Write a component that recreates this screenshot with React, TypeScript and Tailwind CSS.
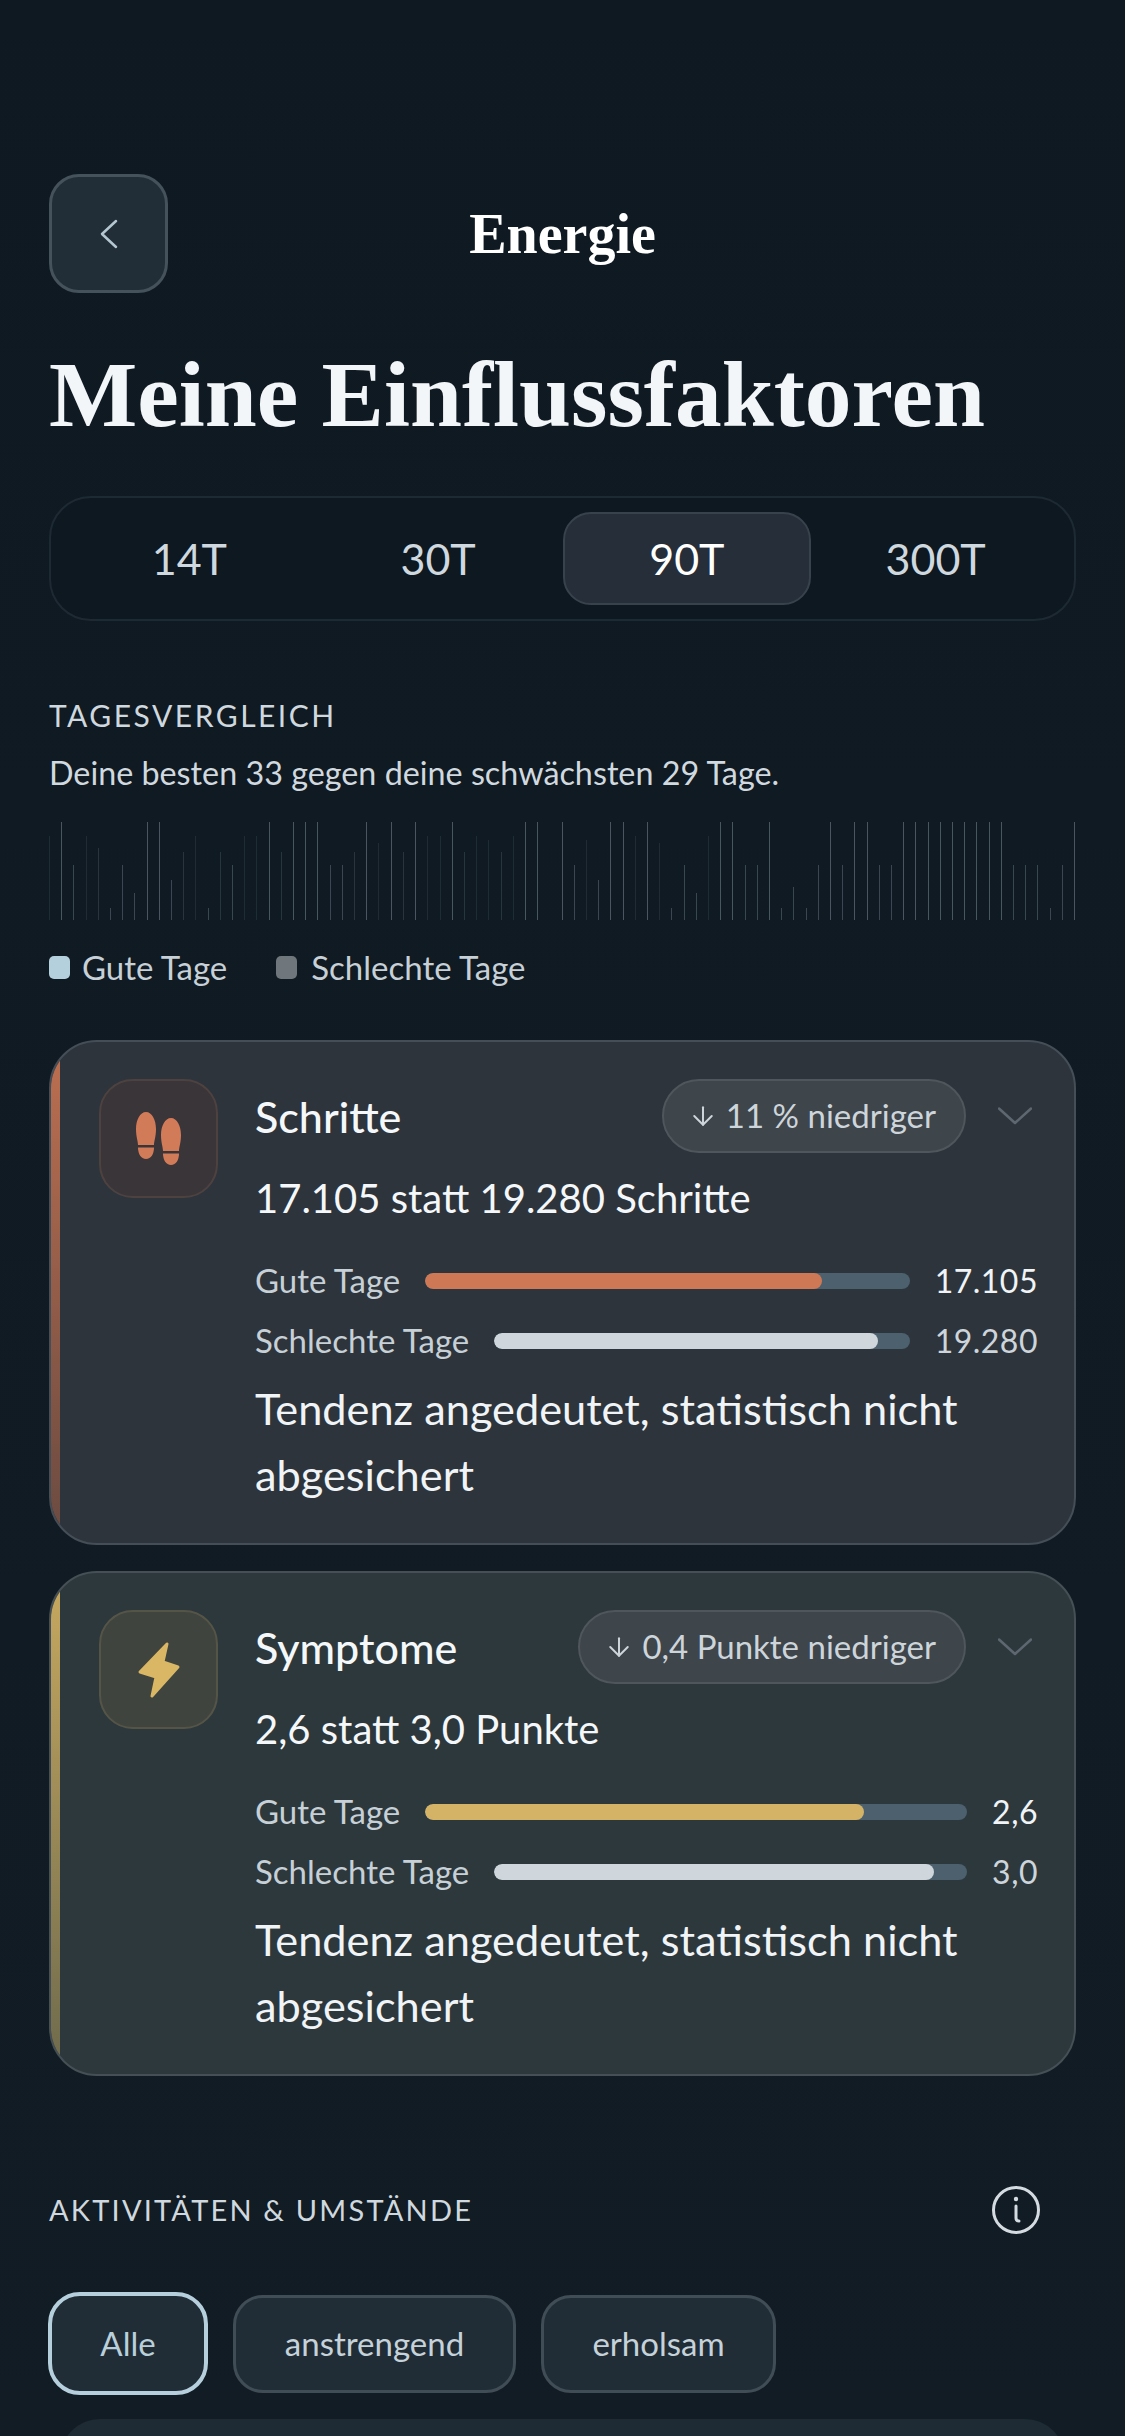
import { ArrowDown } from 'lucide-react'

const SERIF = 'font-["Liberation_Serif",serif]'

// top edge of each day's bar, in 3x crop pixels of the 98px tall strip
const dayTops = [
  78, 36, 165, 78, 115, 295, 165, 250, 36, 36, 210, 125, 78, 295, 125, 165, 78, 78, 36, 125, 36, 36, 36, 165,
  165, 125, 36, 100, 36, 125, 36, 78, 78, 36, 125, 78, 90, 125, 78, 36, 36, 330, 36, 165, 90, 210, 36, 36,
  78, 36, 100, 295, 165, 250, 78, 36, 36, 165, 165, 36, 295, 230, 295, 165, 36, 165, 36, 36, 165, 165, 36, 36, 36,
  36, 36, 36, 36, 36, 36, 165, 165, 165, 295, 165, 36,
]

function barColor(top: number) {
  if (top === 36) return '#4a565f'
  if (top >= 165) return '#3a4650'
  if (top >= 115) return '#29353d'
  return '#202c34'
}

function ChevronDownThin() {
  return (
    <svg width="34" height="18" viewBox="0 0 34 18" fill="none" className="shrink-0">
      <path d="M1 1.5 L17 16 L33 1.5" stroke="#5e6770" strokeWidth="2.5" strokeLinecap="round" strokeLinejoin="round" />
    </svg>
  )
}

function Footprints() {
  const sole = 'M11 1 C17 1 21 9 21 18 C21 26 19 30 19 34 L3 34 C3 30 1 26 1 18 C1 9 5 1 11 1Z'
  const heel = 'M3 36.5 H19 C19 43 16 48 11 48 C6 48 3 43 3 36.5Z'
  return (
    <svg width="48" height="55" viewBox="0 0 48 55" fill="#d27b58">
      <path d={sole} />
      <path d={heel} />
      <g transform="translate(25 6)">
        <path d={sole} />
        <path d={heel} />
      </g>
    </svg>
  )
}

function Bolt() {
  return (
    <svg width="44" height="58" viewBox="0 0 44 58" fill="#d9b764" stroke="#d9b764" strokeWidth="3" strokeLinejoin="round">
      <path d="M30 3 L3 31 L19 36 L15 55 L41 26 L26 21 Z" />
    </svg>
  )
}

type Row = { label: string; value: string; pct: number; color: string; valueColor: string }

function Bar({ label, value, pct, color, valueColor }: Row) {
  return (
    <div className="flex items-center h-[60px]">
      <span className="text-[33px] text-[#c6d0d6] mr-[25px]">{label}</span>
      <div className="flex-1 h-[16px] rounded-full bg-[#4c606d] overflow-hidden">
        <div className="h-full rounded-full" style={{ width: `${pct}%`, backgroundColor: color }} />
      </div>
      <span className="text-[32px] ml-[25px] tracking-[0.5px]" style={{ color: valueColor }}>{value}</span>
    </div>
  )
}

function FactorCard(props: {
  title: string
  badge: string
  summary: string
  icon: React.ReactNode
  cardBg: string
  cardBorder: string
  tile: string
  accent: string
  rows: Row[]
}) {
  return (
    <div className={`relative overflow-hidden rounded-[48px] border-2 h-[505px] pl-[48px] pr-[36px] pt-[37px] flex gap-[37px] ${props.cardBg} ${props.cardBorder}`}>
      <div className={`absolute left-0 top-0 bottom-0 w-[9px] ${props.accent}`} />
      <div className={`w-[119px] h-[119px] rounded-[34px] border-2 flex items-center justify-center shrink-0 ${props.tile}`}>
        {props.icon}
      </div>
      <div className="flex-1 min-w-0">
        <div className="flex items-center h-[74px]">
          <h3 className="text-[43px] font-medium text-[#f5f8fa] pt-[2px]">{props.title}</h3>
          <div className="ml-auto flex items-center h-[74px] pl-[24px] pr-[28px] gap-[8px] rounded-full bg-[#3e454b] border-2 border-[#4f565c] text-[33px] text-[#cdd5db]">
            <ArrowDown size={30} strokeWidth={1.6} />
            <span>{props.badge}</span>
          </div>
          <div className="ml-[32px] mr-[6px]">
            <ChevronDownThin />
          </div>
        </div>
        <p className="mt-[20px] text-[40px] leading-[50px] text-[#f5f8fa]">{props.summary}</p>
        <div className="mt-[28px]">
          {props.rows.map(r => <Bar key={r.label} {...r} />)}
        </div>
        <p className="mt-[4px] text-[43.3px] leading-[66px] text-[#f0f4f6]">
          Tendenz angedeutet, statistisch nicht abgesichert
        </p>
      </div>
    </div>
  )
}

export default function App() {
  return (
    <div className='w-[1125px] h-[2436px] overflow-hidden bg-gradient-to-b from-[#0f1921] to-[#121c24] px-[49px] pt-[174px] font-["Lato",sans-serif]'>
      {/* Header */}
      <div className="flex items-center justify-between">
        <button className="w-[119px] h-[119px] rounded-[30px] bg-[#212e38] border-[3px] border-[#45525c] flex items-center justify-center">
          <svg width="20" height="30" viewBox="0 0 20 30" fill="none">
            <path d="M17 2 L3 15 L17 28" stroke="#b4c6d0" strokeWidth="2.5" strokeLinecap="round" strokeLinejoin="round" />
          </svg>
        </button>
        <h2 className={`${SERIF} font-bold text-[56px] text-white`}>Energie</h2>
        <div className="w-[119px]" />
      </div>

      <h1 className={`${SERIF} font-bold text-[93.5px] leading-[110px] text-[#f2f6f9] mt-[47px]`}>Meine Einflussfaktoren</h1>

      {/* Range */}
      <div className="grid grid-cols-4 mt-[46px] h-[125px] p-[14px] rounded-[42px] bg-[#0e1821] border-2 border-[#1e2a33]">
        {['14T', '30T', '90T', '300T'].map(t => (
          <button
            key={t}
            className={t === '90T'
              ? 'rounded-[28px] bg-[#252e39] border-2 border-[#38424d] text-[43px] text-white pt-[2px]'
              : 'rounded-[28px] text-[43px] text-[#cfd8de] pt-[2px]'}
          >
            {t}
          </button>
        ))}
      </div>

      {/* Tagesvergleich */}
      <div className="mt-[76px] text-[30px] leading-[36px] tracking-[2.5px] text-[#cfd8de]">TAGESVERGLEICH</div>
      <p className="mt-[18px] text-[32.3px] leading-[44px] text-[#d0d9df]">Deine besten 33 gegen deine schwächsten 29 Tage.</p>
      <div className="mt-[27px] h-[98px] flex items-end justify-between">
        {dayTops.map((top, i) => (
          <div key={i} className="w-px" style={{ height: (330 - top) / 3, backgroundColor: barColor(top) }} />
        ))}
      </div>
      <div className="mt-[25px] flex items-center text-[33px] leading-[44px] text-[#c6d0d6]">
        <span className="w-[21px] h-[23px] rounded-[5px] bg-[#b4d0dc] mr-[12px]" />
        <span>Gute Tage</span>
        <span className="w-[21px] h-[23px] rounded-[5px] bg-[#6f767c] ml-[49px] mr-[14px]" />
        <span>Schlechte Tage</span>
      </div>

      {/* Factors */}
      <div className="mt-[51px] flex flex-col gap-[26px]">
        <FactorCard
          title="Schritte"
          badge="11 % niedriger"
          summary="17.105 statt 19.280 Schritte"
          icon={<Footprints />}
          cardBg="bg-[#2d343c]"
          cardBorder="border-[#454e57]"
          tile="bg-[#3a3539] border-[#4d4240]"
          accent="bg-gradient-to-b from-[#bd6f50] to-[#6a4a40]"
          rows={[
            { label: 'Gute Tage', value: '17.105', pct: 82, color: '#cf7856', valueColor: '#f0f4f6' },
            { label: 'Schlechte Tage', value: '19.280', pct: 92.5, color: '#cfd6dc', valueColor: '#cdd5db' },
          ]}
        />
        <FactorCard
          title="Symptome"
          badge="0,4 Punkte niedriger"
          summary="2,6 statt 3,0 Punkte"
          icon={<Bolt />}
          cardBg="bg-[#2d383d]"
          cardBorder="border-[#454f55]"
          tile="bg-[#40443f] border-[#555547]"
          accent="bg-gradient-to-b from-[#c8a95f] to-[#6e6a4c]"
          rows={[
            { label: 'Gute Tage', value: '2,6', pct: 81, color: '#d4b366', valueColor: '#f0f4f6' },
            { label: 'Schlechte Tage', value: '3,0', pct: 93, color: '#cfd6dc', valueColor: '#cdd5db' },
          ]}
        />
      </div>

      {/* Aktivitäten */}
      <div className="mt-[109px] flex items-center justify-between pr-[35px]">
        <span className="text-[29px] tracking-[2.2px] text-[#cfd8de]">AKTIVITÄTEN &amp; UMSTÄNDE</span>
        <svg width="50" height="50" viewBox="0 0 50 50" fill="none" stroke="#d5dce1" strokeWidth="3" strokeLinecap="round">
          <circle cx="25" cy="25" r="22.5" />
          <circle cx="25" cy="14" r="2.2" fill="#d5dce1" stroke="none" />
          <path d="M25 21 V33 Q25 36 28 36" />
        </svg>
      </div>
      <div className="mt-[57px] flex items-center gap-[25px] -ml-px">
        <button className="w-[160px] h-[103px] rounded-[32px] bg-[#212d36] border-4 border-[#b5d0dc] text-[33px] text-[#b9d0da]">Alle</button>
        <button className="w-[283px] h-[98px] rounded-[30px] bg-[#212d36] border-[3px] border-[#414d56] text-[33px] text-[#c6d2d9]">anstrengend</button>
        <button className="w-[235px] h-[98px] rounded-[30px] bg-[#212d36] border-[3px] border-[#414d56] text-[33px] text-[#c6d2d9]">erholsam</button>
      </div>
      <div className="mt-[24px] mx-[11px] h-[80px] rounded-t-[40px] bg-[#1e2b34]" />
    </div>
  )
}
